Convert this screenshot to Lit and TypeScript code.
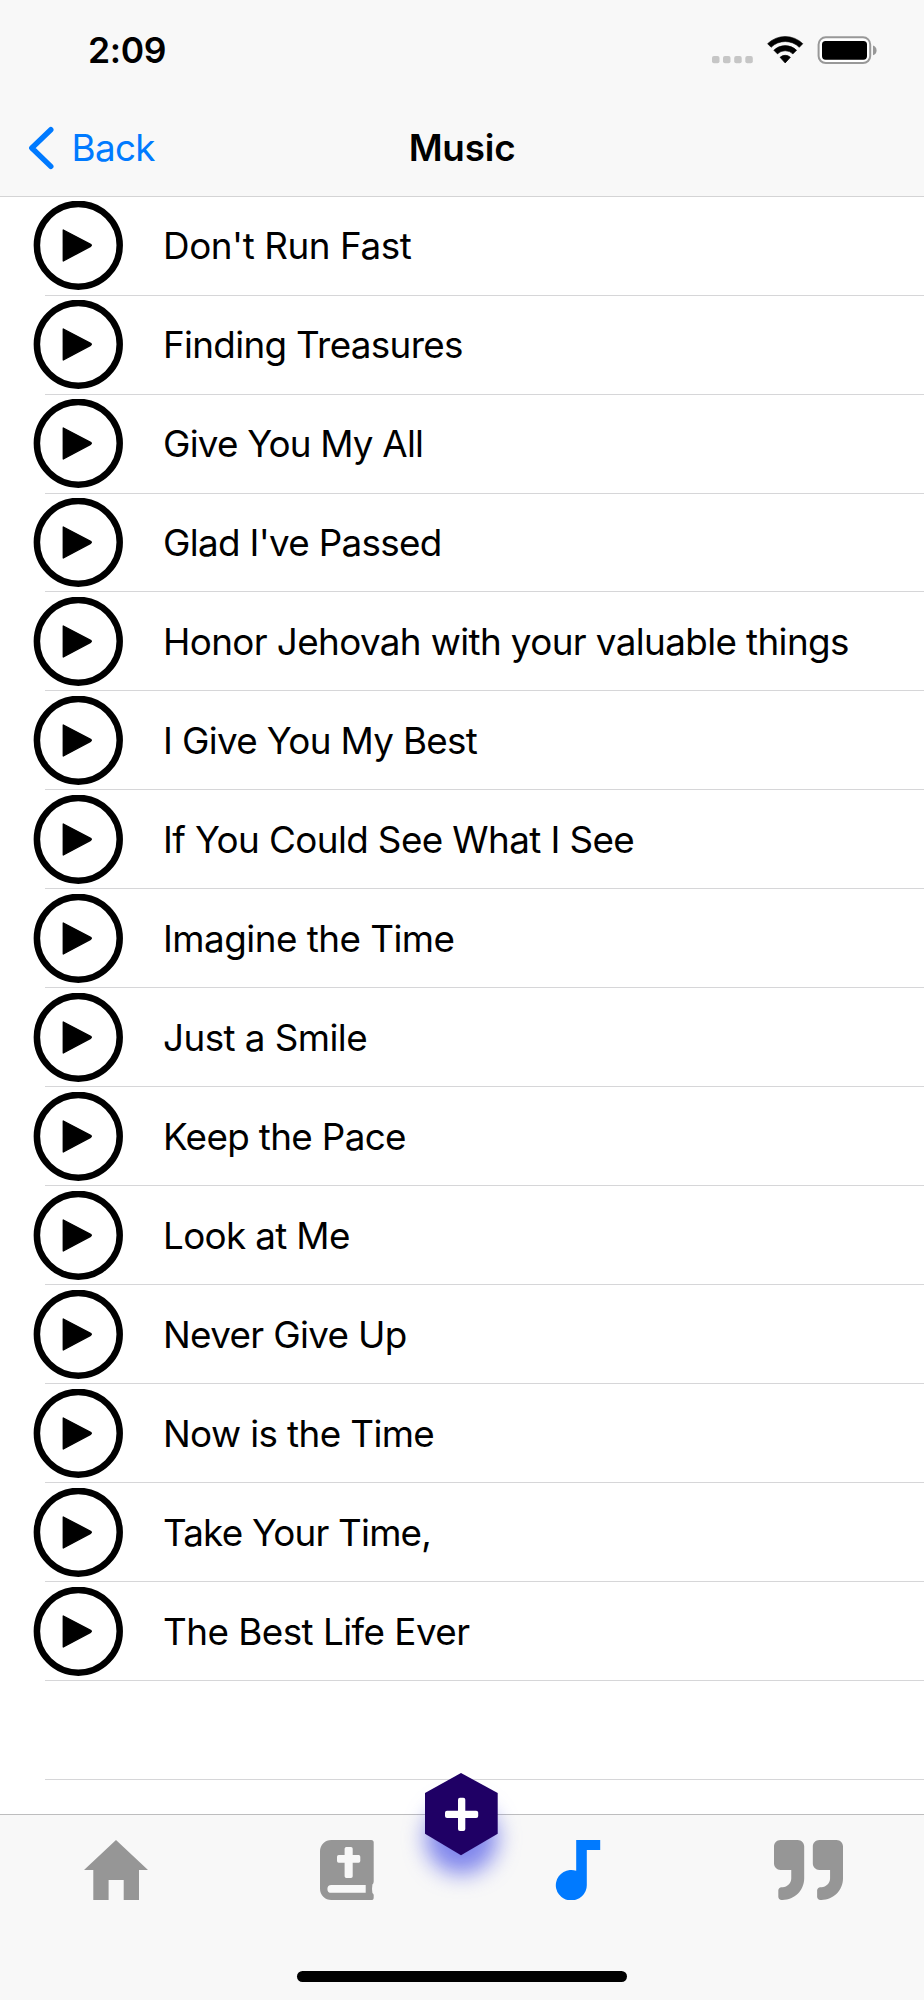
import { LitElement, html, css, svg } from "lit";
import { customElement, property } from "lit/decorators.js";

// Title and its letter tracking in px.
const SONGS: [string, number][] = [
  ["Don't Run Fast", -0.42],
  ["Finding Treasures", -0.67],
  ["Give You My All", -0.8],
  ["Glad I've Passed", -0.68],
  ["Honor Jehovah with your valuable things", -0.61],
  ["I Give You My Best", -0.66],
  ["If You Could See What I See", -0.6],
  ["Imagine the Time", -0.52],
  ["Just a Smile", -0.55],
  ["Keep the Pace", -0.65],
  ["Look at Me", -0.65],
  ["Never Give Up", -0.65],
  ["Now is the Time", -0.6],
  ["Take Your Time,", -0.8],
  ["The Best Life Ever", -0.53],
];

@customElement("status-bar")
class StatusBar extends LitElement {
  static styles = css`
    :host {
      display: flex;
      justify-content: space-between;
      height: 100px;
      padding: 0 47px 0 88px;
      box-sizing: border-box;
    }
    .time {
      font-size: 35.5px;
      font-weight: 560;
      line-height: 44px;
      padding-top: 29px;
      letter-spacing: -0.4px;
    }
    .signals {
      display: block;
      width: 166px;
      height: 30px;
      margin-top: 35px;
    }
  `;
  render() {
    return html`
      <div class="time">2:09</div>
      <svg class="signals" viewBox="711 35 166 30">
        ${[712, 723, 734.2, 745.3].map(
          (x) => svg`<rect x=${x} y="56" width="7.5" height="7.3" rx="2" fill="#c6c6c6"/>`
        )}
        <path d="M767.6 43.7a25.2 25.2 0 0 1 35.2 0l-3.5 3.6a20.1 20.1 0 0 0 -28.2 0z" stroke="#000" stroke-width=".6" stroke-linejoin="round"/>
        <path d="M773.8 50.2a16.3 16.3 0 0 1 22.8 0l-3.7 3.7a11 11 0 0 0 -15.4 0z" stroke="#000" stroke-width=".6" stroke-linejoin="round"/>
        <path d="M780.1 57.3a7.6 7.6 0 0 1 10.2 0l-5.1 5.6z" stroke="#000" stroke-width=".8" stroke-linejoin="round"/>
        <rect x="818.6" y="37.3" width="51.6" height="25.8" rx="7.2" fill="#fff" stroke="#989898" stroke-width="2"/>
        <rect x="822" y="41" width="45" height="18.7" rx="3.6"/>
        <path d="M873 45.6q3.6 1.4 3.6 4.8t-3.6 4.8z" fill="#989898"/>
      </svg>
    `;
  }
}

@customElement("nav-bar")
class NavBar extends LitElement {
  static styles = css`
    :host {
      display: grid;
      grid-template-columns: 1fr auto 1fr;
      align-items: center;
      height: 95px;
      box-sizing: border-box;
      font-size: 36.8px;
      line-height: 44px;
    }
    .back {
      display: flex;
      align-items: center;
      gap: 17.6px;
      padding-left: 28px;
      color: #007aff;
      letter-spacing: -0.7px;
    }
    .chevron {
      width: 26px;
      height: 44px;
    }
    .title {
      font-weight: 570;
      letter-spacing: -0.2px;
    }
  `;
  render() {
    return html`
      <div class="back">
        <svg class="chevron" viewBox="28 125 26 44">
          <path d="M50.8 128.7L31.8 147L50.8 165.4" fill="none" stroke="#007aff" stroke-width="5.4" stroke-linecap="round" stroke-linejoin="round"/>
        </svg>
        <span>Back</span>
      </div>
      <div class="title">Music</div>
    `;
  }
}

@customElement("song-row")
class SongRow extends LitElement {
  @property() label = "";
  @property({ type: Number }) tracking = 0;
  static styles = css`
    :host {
      display: flex;
      align-items: center;
      height: 98.97px;
      padding-left: 33px;
      box-sizing: border-box;
      background: linear-gradient(#d6d6d8, #d6d6d8) 45px 100% / 100% 1.4px no-repeat;
    }
    .play {
      flex: none;
      width: 91px;
      height: 91px;
      filter: blur(0.4px);
    }
    .label {
      margin-left: 39px;
      font-size: 36.8px;
      line-height: 44px;
      white-space: nowrap;
    }
  `;
  render() {
    if (!this.label) return html``;
    return html`
      <svg class="play" viewBox="0 0 91 91">
        <circle cx="45.3" cy="44.3" r="41.4" fill="none" stroke="#000" stroke-width="6.5"/>
        <path d="M30.3 29L57.6 43.3Q59 44.3 57.6 45.3L30.3 60z" stroke="#000" stroke-width="1.4" stroke-linejoin="round"/>
      </svg>
      <span class="label" style="letter-spacing:${this.tracking}px">${this.label}</span>
    `;
  }
}

@customElement("tab-bar")
class TabBar extends LitElement {
  static styles = css`
    :host {
      display: flex;
      flex-direction: column;
      justify-content: space-between;
      align-items: center;
      position: relative;
      height: 186px;
      padding: 25px 0 18px;
      box-sizing: border-box;
      border-top: 1px solid #bdbdbe;
      background: #f8f8f8;
    }
    .tabs {
      display: grid;
      grid-template-columns: repeat(4, 1fr);
      justify-items: center;
      width: 100%;
    }
    .tabs svg {
      display: block;
      height: 60px;
      fill: #969696;
    }
    .tabs .active {
      fill: #007aff;
    }
    .indicator {
      width: 330px;
      height: 11px;
      border-radius: 6px;
      background: #000;
    }
    .add {
      position: absolute;
      left: 401px;
      top: -62px;
      width: 120px;
      height: 150px;
      overflow: visible;
    }
    .glow {
      filter: blur(11px);
    }
  `;
  render() {
    return html`
      <div class="tabs">
        <svg width="64" viewBox="0 0 64 60"><path d="M32 0L64 30H55V60H39.7V40H24.6V60H9.3V30H0z"/></svg>
        <svg width="54" viewBox="0 0 54 60">
          <path fill-rule="evenodd" d="M11.3 0H51.2Q53.7 0 53.7 2.6V41.5Q53.7 43.4 52.4 44.5Q51.7 48.8 52.4 53Q53.7 53.8 53.7 55V57.4Q53.7 60 51.2 60H11.3A11.3 11.3 0 0 1 0 48.7V11.3A11.3 11.3 0 0 1 11.3 0z
            M26.3 7Q24.6 7 24.6 8.7V15H18.7Q17 15 17 16.7V21.1Q17 22.8 18.7 22.8H24.6V36.3Q24.6 38 26.3 38H31Q32.7 38 32.7 36.3V22.8H38.6Q40.3 22.8 40.3 21.1V16.7Q40.3 15 38.6 15H32.7V8.7Q32.7 7 31 7z
            M11.3 45A3.9 3.9 0 0 0 11.3 52.8H45.7V45z"/>
        </svg>
        <svg class="active" width="46" viewBox="0 0 46 60"><path d="M21.2 0H45.2V10H31.8V44.8A15.5 15.2 0 1 1 21.2 30.8z"/></svg>
        <svg width="69" viewBox="0 32 512 448" preserveAspectRatio="none"><path d="M464 32H336c-26.5 0-48 21.5-48 48v128c0 26.5 21.5 48 48 48h80v64c0 35.3-28.7 64-64 64h-8c-13.3 0-24 10.7-24 24v48c0 13.3 10.7 24 24 24h8c88.4 0 160-71.6 160-160V80c0-26.5-21.5-48-48-48zm-288 0H48C21.5 32 0 53.5 0 80v128c0 26.5 21.5 48 48 48h80v64c0 35.3-28.7 64-64 64h-8c-13.3 0-24 10.7-24 24v48c0 13.3 10.7 24 24 24h8c88.4 0 160-71.6 160-160V80c0-26.5-21.5-48-48-48z"/></svg>
      </div>
      <svg class="add" viewBox="401 1753 120 150">
        <circle class="glow" cx="461.5" cy="1838" r="36" fill="#5860e8" fill-opacity=".75"/>
        <path d="M461 1773L497.7 1793V1833.8L461 1855.2L425 1833.8V1793z" fill="#1f0065"/>
        <rect x="458" y="1797.8" width="7.3" height="33.2" rx="2" fill="#fff"/>
        <rect x="445" y="1810.7" width="33.2" height="7.3" rx="2" fill="#fff"/>
      </svg>
      <div class="indicator"></div>
    `;
  }
}

@customElement("app-root")
class AppRoot extends LitElement {
  static styles = css`
    :host {
      display: flex;
      flex-direction: column;
      width: 924px;
      height: 2000px;
      overflow: hidden;
      background: #fff;
      color: #000;
      font-family: Inter, "Liberation Sans", sans-serif;
    }
    .header {
      flex: none;
      height: 197px;
      box-sizing: border-box;
      background: #f8f8f8;
      border-bottom: 1.5px solid #d4d4d5;
    }
    .list {
      flex: 1;
      min-height: 0;
      overflow: hidden;
    }
    tab-bar {
      flex: none;
    }
  `;
  render() {
    return html`
      <div class="header">
        <status-bar></status-bar>
        <nav-bar></nav-bar>
      </div>
      <div class="list">
        ${SONGS.map(([label, tracking]) => html`<song-row .label=${label} .tracking=${tracking}></song-row>`)}
        <song-row></song-row>
      </div>
      <tab-bar></tab-bar>
    `;
  }
}
